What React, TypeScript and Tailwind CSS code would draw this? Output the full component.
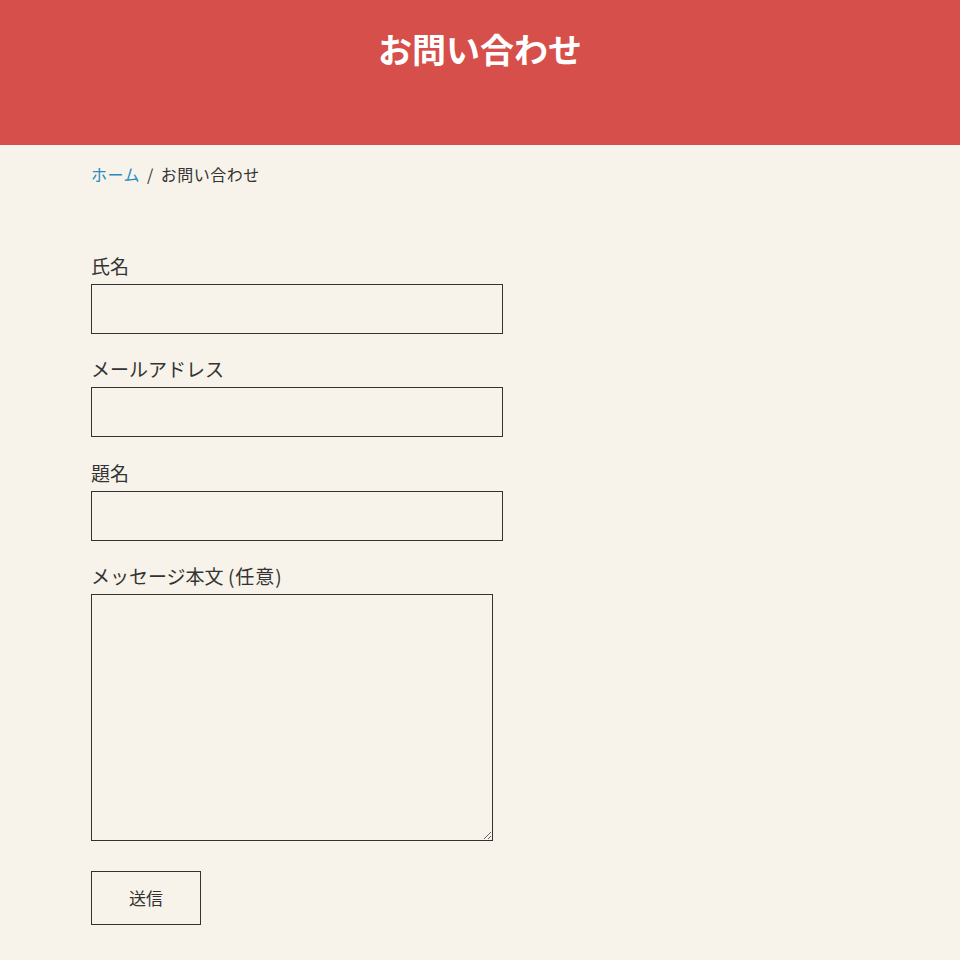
import React from 'react';

const fields = [
  { id: 'name', label: '氏名' },
  { id: 'email', label: 'メールアドレス' },
  { id: 'subject', label: '題名' },
];

export default function App() {
  return (
    <div
      className="min-h-[960px] bg-[#f7f3ea] text-[#333333]"
      style={{ fontFamily: '"Noto Sans CJK JP", "Noto Sans", sans-serif' }}
    >
      {/* header */}
      <header className="h-[145px] bg-[#d64f4a] pt-[26px]">
        <h1 className="text-center text-[34px] font-bold leading-[46px] text-white">お問い合わせ</h1>
      </header>

      <main className="px-[91px]">
        {/* breadcrumb */}
        <nav className="mt-[17px] text-[16px] leading-[24px] tracking-[0.5px]">
          <a href="#" className="text-[#2a8bc1]">ホーム</a>
          <span className="mx-[7px]">/</span>
          <span>お問い合わせ</span>
        </nav>

        <form className="mt-[66px] flex flex-col" onSubmit={(e) => e.preventDefault()}>
          {fields.map((f) => (
            <div key={f.id} className="mb-[21.33px] flex flex-col">
              <label htmlFor={f.id} className="text-[19px] leading-[28px]">
                {f.label}
              </label>
              <input
                id={f.id}
                type="text"
                className="mt-[4px] h-[50px] w-[412px] border border-[#333333] bg-transparent px-2 outline-none"
              />
            </div>
          ))}
          <div className="flex flex-col">
            <label htmlFor="message" className="text-[19px] leading-[28px]">
              メッセージ本文 <span className="tracking-[1px]">(任意)</span>
            </label>
            <textarea
              id="message"
              className="mt-[4px] h-[247px] w-[402px] border border-[#333333] bg-transparent p-2 outline-none"
            />
          </div>
          <div className="mt-[30px]">
            <button
              type="submit"
              className="h-[54px] w-[110px] border border-[#333333] bg-transparent text-[17px] text-[#333333]"
            >
              送信
            </button>
          </div>
        </form>
      </main>
    </div>
  );
}
